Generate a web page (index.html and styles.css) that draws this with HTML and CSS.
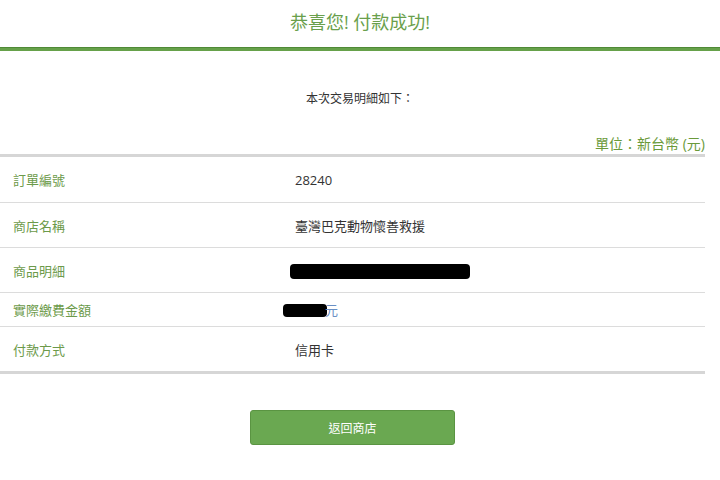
FILE: index.html
```html
<!DOCTYPE html>
<html lang="zh-Hant">
<head>
<meta charset="utf-8">
<link rel="stylesheet" href="styles.css">
</head>
<body>
<div class="page">
  <header class="head">恭喜您! 付款成功!</header>
  <p class="intro">本次交易明細如下：</p>
  <div class="unit">單位：新台幣 (元)</div>
  <div class="table">
    <div class="row"><div class="label">訂單編號</div><div class="value">28240</div></div>
    <div class="row"><div class="label">商店名稱</div><div class="value">臺灣巴克動物懷善救援</div></div>
    <div class="row"><div class="label">商品明細</div><div class="value"><span class="redact r1"></span></div></div>
    <div class="row short"><div class="label">實際繳費金額</div><div class="value"><span class="redact r2"></span><span class="yuan">元</span></div></div>
    <div class="row"><div class="label">付款方式</div><div class="value">信用卡</div></div>
  </div>
  <div class="actions"><button class="btn">返回商店</button></div>
</div>
</body>
</html>
```
FILE: styles.css
```css
html, body { margin: 0; padding: 0; background: #fff; }
body { font-family: "Open Sans", "Noto Sans CJK TC", sans-serif; color: #333; }
.page { width: 720px; }
.head {
  height: 48px;
  line-height: 44px;
  text-align: center;
  font-size: 18px;
  color: #6a9f4c;
  border-bottom: 3px solid #66a14a;
  box-shadow: inset 0 -1px 0 #4f8a36;
}
.intro {
  margin: 0;
  padding-top: 37px;
  height: 22px;
  line-height: 22px;
  text-align: center;
  font-size: 12px;
  color: #333;
}
.unit {
  width: 705px;
  text-align: right;
  font-size: 14px;
  color: #6a9a3a;
  margin-top: 24px;
  height: 20px;
  line-height: 20px;
}
.table {
  width: 705px;
  border-top: 3px solid #d6d6d6;
  border-bottom: 3px solid #d6d6d6;
}
.row {
  display: flex;
  align-items: center;
  height: 44px;
  border-top: 1px solid #dcdcdc;
  font-size: 13px;
}
.row:first-child { border-top: none; height: 45px; }
.row.short { height: 33px; }
.label { width: 282px; padding-left: 13px; color: #6c9a4a; }
.value { color: #333; display: flex; align-items: center; }
.redact { display: inline-block; background: #000; border-radius: 4px; }
.r1 { width: 180px; height: 15px; margin-left: -5px; margin-top: 2px; }
.r2 { width: 44px; height: 13px; margin-left: -12px; margin-top: 2px; }
.yuan { color: #6a8fc4; margin-left: -2px; }
.actions { display: flex; justify-content: center; padding-top: 36px; }
.btn {
  width: 205px;
  height: 35px;
  margin-left: -15px;
  background: #6aa851;
  border: 1px solid #5a9442;
  border-radius: 3px;
  color: #fff;
  font-family: "Noto Sans CJK TC", sans-serif;
  font-size: 12px;
}
```
